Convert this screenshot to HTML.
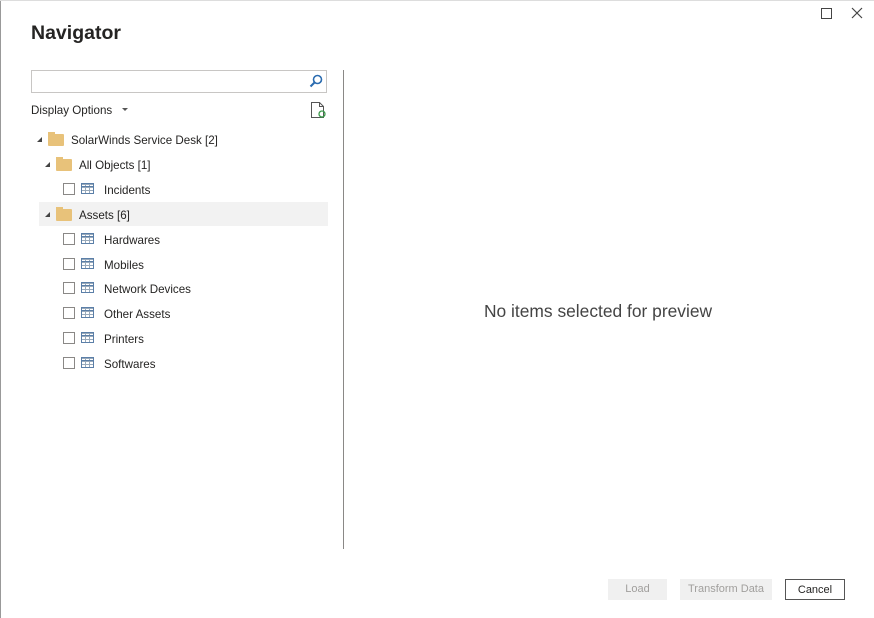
<!DOCTYPE html>
<html><head><style>
body{margin:0;width:874px;height:618px;background:#fff;font-family:"Liberation Sans",sans-serif;position:relative;overflow:hidden;color:#252423}
.a{position:absolute}
.t{font-size:11.6px;white-space:nowrap}
.fold{position:absolute;width:16px;height:12px;background:#e8c27a;border-radius:1px}
.fold:before{content:"";position:absolute;left:0;top:-2px;width:7px;height:3px;background:#e8c27a}
.tri{position:absolute;width:0;height:0;border-left:5px solid transparent;border-bottom:5px solid #444}
.cb{position:absolute;width:10px;height:10px;border:1px solid #8a8886;background:#fff}
.tb{position:absolute;width:13px;height:11px;border:1px solid #5b7fa8;box-sizing:border-box;background:
linear-gradient(#5b7fa8,#5b7fa8) 0 2px/100% 1px no-repeat,
repeating-linear-gradient(90deg,transparent 0 3px,#9ab 3px 4px),
repeating-linear-gradient(0deg,transparent 0 2px,#9ab 2px 3px)}
.btn{position:absolute;height:21px;font-size:11px;text-align:center;line-height:21px;box-sizing:border-box}
</style></head><body>
<div class="a" style="left:0;top:0;width:1px;height:618px;background:#999"></div>
<div class="a" style="left:0;top:0;width:874px;height:1px;background:#ddd"></div>
<div class="a" style="left:31px;top:22px;font-size:19.5px;font-weight:bold;color:#252423">Navigator</div>
<div class="a" style="left:821px;top:8px;width:9px;height:9px;border:1px solid #444"></div>
<svg class="a" style="left:851px;top:7px" width="12" height="12"><path d="M1 1L11 11M11 1L1 11" stroke="#444" stroke-width="1.2"/></svg>
<div class="a" style="left:31px;top:70px;width:296px;height:23px;border:1px solid #c8c6c4;box-sizing:border-box"></div>
<svg class="a" style="left:309px;top:74px" width="14" height="14"><circle cx="8.5" cy="5.5" r="4" fill="none" stroke="#2b6cb0" stroke-width="1.6"/><line x1="5.5" y1="8.5" x2="1.5" y2="12.5" stroke="#2b6cb0" stroke-width="2"/></svg>
<div class="a t" style="left:31px;top:104px">Display Options</div>
<div class="a" style="left:122px;top:108px;border-left:3px solid transparent;border-right:3px solid transparent;border-top:3px solid #555"></div>
<svg class="a" style="left:310px;top:101px" width="18" height="18"><path d="M1.5 1.5h8l4 4v11h-12z M9.5 1.5v4h4" fill="none" stroke="#555"/><circle cx="12" cy="13" r="3" fill="none" stroke="#3a9a4a" stroke-width="1.3"/></svg>
<div class="a" style="left:39px;top:202px;width:289px;height:24px;background:#f2f2f2"></div>
<div class="tri" style="left:37px;top:137px"></div><div class="fold" style="left:48px;top:134px"></div><div class="a t" style="left:71px;top:134px">SolarWinds Service Desk [2]</div>
<div class="tri" style="left:45px;top:162px"></div><div class="fold" style="left:56px;top:159px"></div><div class="a t" style="left:79px;top:159px">All Objects [1]</div>
<div class="tri" style="left:45px;top:212px"></div><div class="fold" style="left:56px;top:209px"></div><div class="a t" style="left:79px;top:209px">Assets [6]</div>
<div class="cb" style="left:63px;top:183px"></div><div class="tb" style="left:81px;top:183px"></div><div class="a t" style="left:104px;top:184px">Incidents</div>
<div class="cb" style="left:63px;top:233px"></div><div class="tb" style="left:81px;top:233px"></div><div class="a t" style="left:104px;top:234px">Hardwares</div>
<div class="cb" style="left:63px;top:258px"></div><div class="tb" style="left:81px;top:258px"></div><div class="a t" style="left:104px;top:259px">Mobiles</div>
<div class="cb" style="left:63px;top:282px"></div><div class="tb" style="left:81px;top:282px"></div><div class="a t" style="left:104px;top:283px">Network Devices</div>
<div class="cb" style="left:63px;top:307px"></div><div class="tb" style="left:81px;top:307px"></div><div class="a t" style="left:104px;top:308px">Other Assets</div>
<div class="cb" style="left:63px;top:332px"></div><div class="tb" style="left:81px;top:332px"></div><div class="a t" style="left:104px;top:333px">Printers</div>
<div class="cb" style="left:63px;top:357px"></div><div class="tb" style="left:81px;top:357px"></div><div class="a t" style="left:104px;top:358px">Softwares</div>
<div class="a" style="left:343px;top:70px;width:1px;height:479px;background:#8a8886"></div>
<div class="a" style="left:484px;top:301px;font-size:17.4px;color:#444">No items selected for preview</div>
<div class="btn" style="left:608px;top:579px;width:59px;background:#f0f0f0;color:#a19f9d">Load</div>
<div class="btn" style="left:680px;top:579px;width:92px;background:#f0f0f0;color:#a19f9d">Transform Data</div>
<div class="btn" style="left:785px;top:579px;width:60px;border:1px solid #555;color:#252423;line-height:21px">Cancel</div>
</body></html>
